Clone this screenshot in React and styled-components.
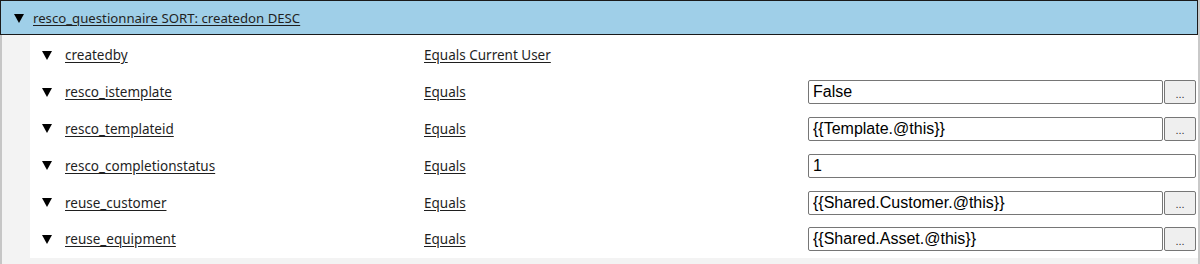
import React from 'react';
import styled, { createGlobalStyle } from 'styled-components';

const GlobalStyle = createGlobalStyle`
  html, body {
    margin: 0;
    padding: 0;
    background: #ffffff;
  }
  body {
    font-family: "Noto Sans", "Open Sans", sans-serif;
    font-size: 13.5px;
    color: #222;
  }
`;

const Frame = styled.div`
  width: 1200px;
  height: 264px;
  overflow: hidden;
  border-right: 2px solid #c9c9c9;
  box-sizing: border-box;
`;

const Header = styled.div`
  display: flex;
  align-items: center;
  gap: 9px;
  height: 35px;
  box-sizing: border-box;
  padding: 1px 0 0 13px;
  background: #9fcfe8;
  border: 1px solid #1a1a1a;
  font-size: 13.2px;
`;

const Arrow = () => (
  <svg width="10" height="9" viewBox="0 0 10 9" style={{ flex: 'none' }}>
    <polygon points="0,0 10,0 5,9" fill="#000" />
  </svg>
);

const Link = styled.a`
  color: #1f1f1f;
  text-decoration: underline;
  text-underline-offset: 2px;
  cursor: pointer;
  white-space: nowrap;
`;

const Body = styled.div`
  background: #f3f3f3;
  border-left: 2px solid #c6c6c6;
  padding: 0 0 7px 28px;
`;

const Panel = styled.div`
  background: #ffffff;
  padding-top: 2px;
`;

const Row = styled.div`
  display: grid;
  grid-template-columns: 382px 384px 1fr;
  align-items: center;
  height: 36.8px;
  padding: 0 2px 0 12px;
`;

const LabelCell = styled.div`
  display: flex;
  align-items: center;
  gap: 13px;
`;

const ValueCell = styled.div`
  display: flex;
  align-items: center;
  gap: 1px;
`;

const Input = styled.input`
  flex: 1;
  min-width: 0;
  height: 24px;
  box-sizing: border-box;
  border: 1px solid #767676;
  border-radius: 2px;
  padding: 0 4px;
  font-family: "Liberation Sans", Arial, sans-serif;
  font-size: 16px;
  color: #000;
  background: #fff;
  outline: none;
`;

const DotsButton = styled.button`
  width: 32px;
  height: 24px;
  box-sizing: border-box;
  border: 1px solid #767676;
  border-radius: 2px;
  background: #efefef;
  font-family: "Liberation Sans", Arial, sans-serif;
  font-size: 11px;
  color: #333;
  padding: 4px 0 0;
  line-height: 1;
`;

const rows = [
  { field: 'createdby', op: 'Equals Current User' },
  { field: 'resco_istemplate', op: 'Equals', value: 'False', button: true },
  { field: 'resco_templateid', op: 'Equals', value: '{{Template.@this}}', button: true },
  { field: 'resco_completionstatus', op: 'Equals', value: '1' },
  { field: 'reuse_customer', op: 'Equals', value: '{{Shared.Customer.@this}}', button: true },
  { field: 'reuse_equipment', op: 'Equals', value: '{{Shared.Asset.@this}}', button: true },
];

const App = () => {
  return (
    <>
      <GlobalStyle />
      <Frame>
        <Header>
          <Arrow />
          <Link>resco_questionnaire SORT: createdon DESC</Link>
        </Header>
        <Body>
          <Panel>
            {rows.map((r) => (
              <Row key={r.field}>
                <LabelCell>
                  <Arrow />
                  <Link>{r.field}</Link>
                </LabelCell>
                <div>
                  <Link>{r.op}</Link>
                </div>
                <ValueCell>
                  {r.value !== undefined && <Input defaultValue={r.value} />}
                  {r.button && <DotsButton>...</DotsButton>}
                </ValueCell>
              </Row>
            ))}
          </Panel>
        </Body>
      </Frame>
    </>
  );
};

export default App;
